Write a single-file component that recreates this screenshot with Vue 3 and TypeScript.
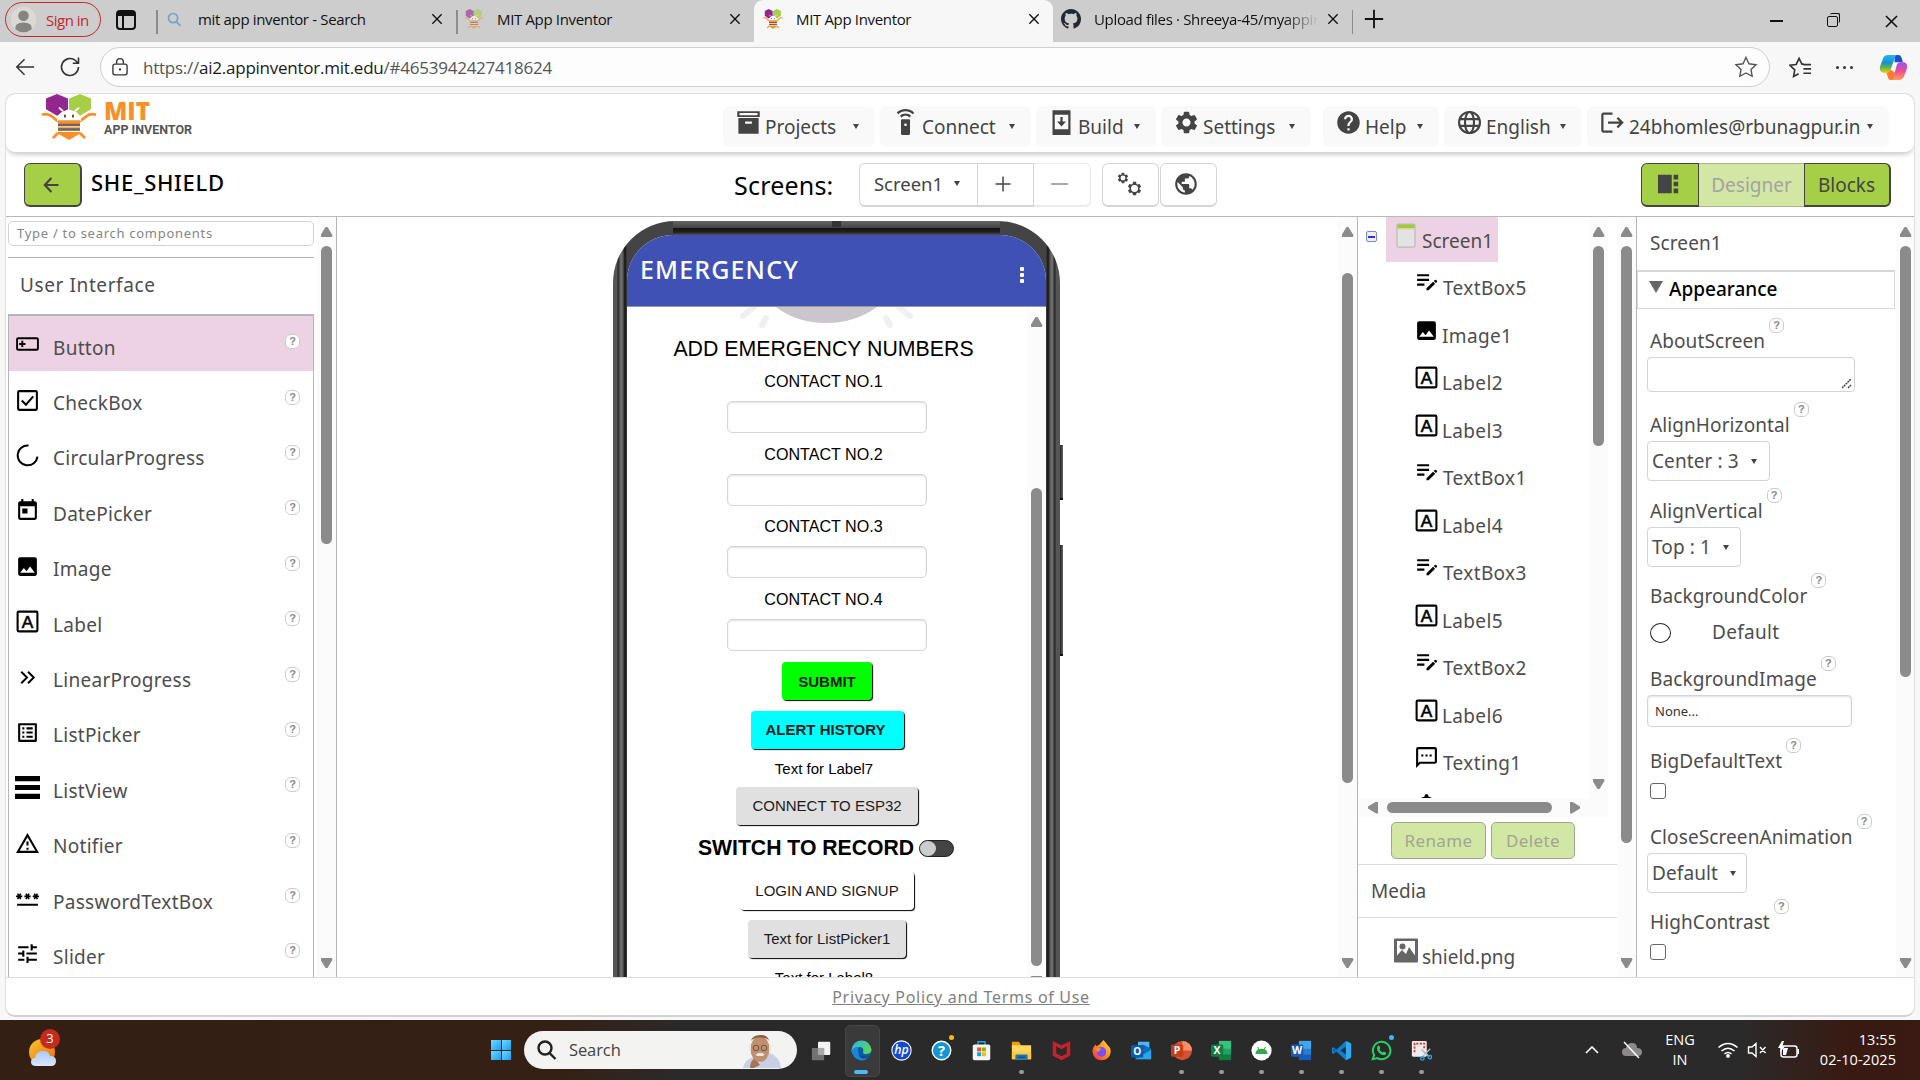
<script setup lang="ts">
interface MenuItem { label: string; icon: string; left: number; width: number }
interface Prop { label: string; height: number; kind: 'area' | 'select' | 'color' | 'field' | 'check' | 'none'; value?: string; width?: number; h?: number }

const svg = (body: string, box = '0 0 24 24', fit = 'xMidYMid meet'): string => `<svg viewBox="${box}" preserveAspectRatio="${fit}" width="100%" height="100%" style="display:block">${body}</svg>`
const p = (d: string): string => svg(`<path fill="currentColor" d="${d}"/>`)
const gear = 'M19.14 12.94c.04-.3.06-.61.06-.94 0-.32-.02-.64-.07-.94l2.03-1.58c.18-.14.23-.41.12-.61l-1.92-3.32c-.12-.22-.37-.29-.59-.22l-2.39.96c-.5-.38-1.03-.7-1.62-.94l-.36-2.54c-.04-.24-.24-.41-.48-.41h-3.84c-.24 0-.43.17-.47.41l-.36 2.54c-.59.24-1.13.57-1.62.94l-2.39-.96c-.22-.08-.47 0-.59.22L2.74 8.87c-.12.21-.08.47.12.61l2.03 1.58c-.05.3-.09.63-.09.94s.02.64.07.94l-2.03 1.58c-.18.14-.23.41-.12.61l1.92 3.32c.12.22.37.29.59.22l2.39-.96c.5.38 1.03.7 1.62.94l.36 2.54c.05.24.24.41.48.41h3.84c.24 0 .44-.17.47-.41l.36-2.54c.59-.24 1.13-.56 1.62-.94l2.39.96c.22.08.47 0 .59-.22l1.92-3.32c.12-.22.07-.47-.12-.61l-2.01-1.58z'
const bee = `<path fill="#92278f" d="M5 5 16 0 27 5V17L16 24 5 17z"/><path fill="#a5cf47" d="M28 5 39 0 50 5V17L39 24 28 17z"/>
<path d="M1 23q6-2 10 2t8 6M55 23q-6-2-10 2t-8 6M17 43l-5 6M39 43l5 6" stroke="#f7902a" stroke-width="3" fill="none"/>
<path fill="#fff" d="M16 30q1-12 12-12t12 12z"/><path d="M22 19l-4-4M34 19l4-4" stroke="#fff" stroke-width="2"/>
<path fill="#555" d="M23 23h2v3h-2zM31 23h2v3h-2z"/>
<path fill="#f7902a" d="M17 29H39V44L28 51 17 44z"/><path fill="#666" d="M17 33H39V35.500H17zM17 38H39V40.500H17z"/><path fill="#fff" d="M17 36H39V37H17zM17 41H39V42H17z"/>`

const icons: Record<string, string> = {
  logo: svg(bee, '0 0 56 51', 'none'),
  projects: svg('<path fill="currentColor" fill-rule="evenodd" d="M2 2H22V7H2zM4 3.500V5.500H20V3.500zM3 8H21V22H3zM9 11V13H15V11z"/>'),
  connect: p('M15 9H9c-.55 0-1 .45-1 1v12c0 .55.45 1 1 1h6c.55 0 1-.45 1-1V10c0-.55-.45-1-1-1zm-3 6.200c-.8 0-1.200-.4-1.200-1.200s.4-1.200 1.200-1.200 1.200.4 1.200 1.200-.4 1.200-1.200 1.200zM7.050 6.050l1.410 1.410C9.370 6.560 10.620 6 12 6s2.630.56 3.540 1.460l1.410-1.410C15.680 4.780 13.930 4 12 4s-3.680.78-4.950 2.050zM12 0C8.960 0 6.210 1.230 4.220 3.220l1.410 1.410C7.260 3.010 9.510 2 12 2s4.740 1.010 6.360 2.640l1.410-1.410C17.790 1.230 15.040 0 12 0z'),
  build: svg('<path fill="currentColor" fill-rule="evenodd" d="M4 1H20V23H4zM6 5V18H18V5z"/><path fill="currentColor" d="M11 7h2v4h3l-4 4.500L8 11h3z"/>'),
  settings: p(gear + 'M12 15.600c-1.980 0-3.600-1.620-3.600-3.600s1.620-3.600 3.600-3.600 3.600 1.620 3.600 3.600-1.620 3.600-3.600 3.600z'),
  help: p('M12 2C6.480 2 2 6.480 2 12s4.480 10 10 10 10-4.480 10-10S17.520 2 12 2zm1 17h-2v-2h2v2zm2.070-7.750l-.9.92C13.450 12.900 13 13.500 13 15h-2v-.5c0-1.100.45-2.100 1.170-2.830l1.240-1.260c.37-.36.59-.86.59-1.410 0-1.100-.9-2-2-2s-2 .9-2 2H8c0-2.210 1.790-4 4-4s4 1.790 4 4c0 .88-.36 1.680-.93 2.250z'),
  english: svg('<g fill="none" stroke="currentColor" stroke-width="1.900"><circle cx="12" cy="12" r="9.300"/><ellipse cx="12" cy="12" rx="4" ry="9.300"/><path d="M3.500 9H20.500M3.500 15H20.500"/></g>'),
  logout: p('M17 7l-1.410 1.410L18.170 11H8v2h10.170l-2.580 2.580L17 17l5-5zM4 5h8V3H4c-1.100 0-2 .9-2 2v14c0 1.100.9 2 2 2h8v-2H4V5z'),
  globe: p('M12 2C6.480 2 2 6.480 2 12s4.480 10 10 10 10-4.480 10-10S17.520 2 12 2zm-1 17.930c-3.950-.49-7-3.850-7-7.930 0-.62.08-1.210.21-1.790L9 15v1c0 1.100.9 2 2 2v1.930zm6.900-2.540c-.26-.81-1-1.390-1.900-1.390h-1v-3c0-.55-.45-1-1-1H8v-2h2c.55 0 1-.45 1-1V7h2c1.100 0 2-.9 2-2v-.41c2.930 1.190 5 4.060 5 7.410 0 2.080-.8 3.970-2.100 5.390z'),
  gears: svg(`<g fill="currentColor" fill-rule="evenodd"><g transform="translate(-.5 .5) scale(.5)"><path d="${gear}M12 16.500a4.500 4.500 0 1 1 0-9a4.500 4.500 0 0 1 0 9z"/></g><g transform="translate(8.500 8.500) scale(.64)"><path d="${gear}M12 17a5 5 0 1 1 0-10a5 5 0 0 1 0 10z"/></g></g>`),
  back: svg('<path d="M21 12H5M12.500 3.500 4.500 12 12.500 20.500" fill="none" stroke="currentColor" stroke-width="2.500"/>'),
  button: svg('<path d="M3 6H21Q22 6 22 7V16Q22 17 21 17H3Q2 17 2 16V7Q2 6 3 6zM7 8.500V14.500M4 11.500H10" fill="none" stroke="currentColor" stroke-width="1.800"/>'),
  checkbox: svg('<path d="M4 3H20Q21 3 21 4V20Q21 21 20 21H4Q3 21 3 20V4Q3 3 4 3zM6.500 12 10.500 16 17.500 8" fill="none" stroke="currentColor" stroke-width="2"/>'),
  circular: svg('<path d="M13 2.500A9.500 9.500 0 1 0 21.500 13" fill="none" stroke="currentColor" stroke-width="1.900"/>'),
  date: p('M19 3h-1V1h-2v2H8V1H6v2H5c-1.110 0-1.990.9-1.990 2L3 19c0 1.100.89 2 2 2h14c1.100 0 2-.9 2-2V5c0-1.100-.9-2-2-2zm0 16H5V8h14v11zM7 10h5v5H7z'),
  image: p('M21 19V5c0-1.100-.9-2-2-2H5c-1.100 0-2 .9-2 2v14c0 1.100.9 2 2 2h14c1.100 0 2-.9 2-2zM8.500 13.500l2.500 3.010L14.500 12l4.500 6H5l3.500-4.500z'),
  label: svg('<rect x="2.500" y="2.500" width="19" height="19" rx="1" fill="none" stroke="currentColor" stroke-width="2"/><text x="12" y="18" text-anchor="middle" font-family="Liberation Sans, sans-serif" font-size="16.500" stroke="currentColor" stroke-width=".6">A</text>'),
  linear: svg('<path d="M6 6.500 11.500 12 6 17.500M12.500 6.500 18 12 12.500 17.500" fill="none" stroke="currentColor" stroke-width="1.900"/>'),
  listpicker: p('M19 5v14H5V5h14m1.100-2H3.900c-.5 0-.9.4-.9.9v16.200c0 .4.4.9.9.9h16.200c.4 0 .9-.5.9-.9V3.900c0-.5-.5-.9-.9-.9zM11 7h6v2h-6V7zm0 4h6v2h-6v-2zm0 4h6v2h-6zM7 7h2v2H7zm0 4h2v2H7zm0 4h2v2H7z'),
  listview: p('M0 1H24V6H0zM0 9.500H24V14.500H0zM0 18H24V23H0z'),
  notifier: p('M12 5.990L19.530 19H4.470L12 5.990M12 2L1 21h22L12 2zm1 14h-2v2h2v-2zm0-6h-2v4h2v-4z'),
  password: p('M2 17h20v2H2v-2zm1.150-4.050L4 11.470l.85 1.480 1.300-.75-.85-1.480H7v-1.500H5.300l.85-1.470L4.850 7 4 8.470 3.150 7l-1.300.75.85 1.470H1v1.500h1.700l-.85 1.480 1.300.75zm6.700-.75l1.300.75.85-1.480.85 1.480 1.300-.75-.85-1.480H15v-1.500h-1.700l.85-1.470-1.300-.75L12 8.470 11.150 7l-1.300.75.85 1.470H9v1.500h1.700l-.85 1.480zM23 9.220h-1.700l.85-1.470-1.300-.75L20 8.470 19.150 7l-1.300.75.85 1.470H17v1.500h1.700l-.85 1.480 1.300.75.85-1.480.85 1.480 1.300-.75-.85-1.480H23v-1.500z'),
  slider: p('M3 17v2h6v-2H3zM3 5v2h10V5H3zm10 16v-2h8v-2h-8v-2h-2v6h2zM7 9v2H3v2h4v2h2V9H7zm14 4v-2H11v2h10zm-6-4h2V7h4V5h-4V3h-2v6z'),
  textbox: svg('<path d="M3 5H14.500M3 9.500H14.500M3 14H10" stroke="currentColor" stroke-width="2"/><path fill="currentColor" d="M12 17.500 18.300 11.200 20.300 13.200 14 19.500H12zM19 10.500 20 9.500Q20.600 9.100 21.200 9.500L22 10.300Q22.500 11 22 11.500L21 12.500z"/>'),
  texting: p('M4 4h16v12H5.170L4 17.170V4m0-2c-1.100 0-1.990.9-1.990 2L2 22l4-4h14c1.100 0 2-.9 2-2V4c0-1.100-.9-2-2-2H4zm3 7h2v2H7zm4 0h2v2h-2zm4 0h2v2h-2z'),
  star: p('M12 1Q14 1 14 3.500 19 4.500 20 9V18H4V9Q5 4.500 10 3.500 10 1 12 1z'),
  screen: svg('<rect x="3" y=".6" width="18" height="23" rx="1.500" fill="#e3e3e3" stroke="#b9b9b9" stroke-width="1.200"/><path fill="#a5c936" d="M3.500 1H20.500V4.500H3.500z"/><path fill="#cfdc9c" d="M3.500 4.500H20.500V6H3.500z"/>'),
  media: svg('<path fill="#666" fill-rule="evenodd" d="M1 0H23Q24 0 24 1V23Q24 24 23 24H1Q0 24 0 23V1Q0 0 1 0zM3 2.500V17L8 11.500 12 15.500 15 8.500 21 17V2.500z"/><circle cx="8.500" cy="8" r="3" fill="#666"/>'),
  panel: svg('<path fill="currentColor" d="M0 2H15V22H0zM17 2H22V7H17zM17 9.500H22V14.500H17zM17 17H22V22H17z"/>'),
  x: svg('<path d="M5 5 19 19M19 5 5 19" stroke="currentColor" stroke-width="2" fill="none"/>'),
  plus: svg('<path d="M12 2V22M2 12H22" stroke="currentColor" stroke-width="2" fill="none"/>'),
  tabs: svg('<rect x="3" y="3" width="18" height="18" rx="3" fill="none" stroke="#111" stroke-width="2"/><path fill="#111" d="M3 3H21V8H3z"/><path d="M9 7V21" stroke="#111" stroke-width="2"/>'),
  avatar: svg('<circle cx="18" cy="18" r="17" fill="#dcd9d3"/><circle cx="18" cy="13" r="7" fill="#868481"/><path fill="#868481" d="M7 31Q6 22 18 22T29 31Q24 35 18 35T7 31z"/>', '0 0 36 36'),
  search: svg('<g fill="none" stroke="currentColor" stroke-width="2.400"><circle cx="10" cy="10" r="6.500"/><path d="M14.500 15 20.500 21"/></g>'),
  github: svg('<path fill="#24292f" d="M8 0C3.580 0 0 3.580 0 8c0 3.540 2.290 6.530 5.470 7.590.4.07.55-.17.55-.38 0-.19-.01-.82-.01-1.490-2.010.37-2.530-.49-2.690-.94-.09-.23-.48-.94-.82-1.130-.28-.15-.68-.52-.01-.53.63-.01 1.080.58 1.230.82.72 1.210 1.870.87 2.330.66.07-.52.28-.87.51-1.070-1.780-.2-3.640-.89-3.640-3.950 0-.87.31-1.590.82-2.150-.08-.2-.36-1.020.08-2.120 0 0 .67-.21 2.200.82.64-.18 1.320-.27 2-.27.68 0 1.360.09 2 .27 1.530-1.040 2.200-.82 2.200-.82.44 1.100.16 1.920.08 2.120.51.56.82 1.270.82 2.150 0 3.070-1.870 3.750-3.650 3.950.29.25.54.73.54 1.480 0 1.070-.01 1.930-.01 2.200 0 .21.15.46.55.38A8.012 8.012 0 0 0 16 8c0-4.420-3.580-8-8-8z"/>', '0 0 16 16'),
  reload: svg('<path d="M20.500 12A8.500 8.500 0 1 1 17.500 5.500L20 8M20.500 2.500V8.200H14.800" fill="none" stroke="currentColor" stroke-width="1.600"/>'),
  navback: svg('<path d="M22 12H3M11.500 3.500 3 12 11.500 20.500" fill="none" stroke="currentColor" stroke-width="1.600"/>'),
  lock: svg('<g fill="none" stroke="currentColor" stroke-width="1.600"><rect x="3.500" y="8.500" width="17" height="13" rx="2.500"/><path d="M8 8V6Q8 2 12 2T16 6V8"/></g><circle cx="12" cy="15" r="1.400" fill="currentColor"/>'),
  fav: svg('<path d="M12 2.500 15 8.800 22 9.700 17 14.500 18.200 21.300 12 18 5.800 21.300 7 14.500 2 9.700 9 8.800z" fill="none" stroke="currentColor" stroke-width="1.400"/>'),
  favs: svg('<path d="M15.500 8.500 13.500 8.500 10.500 2.500 7.500 8.800 1 9.700 6 14.500 4.800 21.300 10 18.500M15 9H23M15 13.500H23M15 18H23" fill="none" stroke="currentColor" stroke-width="1.700"/>'),
  copilot: svg('<defs><linearGradient id="ca" x2="0" y2="1"><stop stop-color="#23b5f5"/><stop offset=".45" stop-color="#1c8fd0"/><stop offset=".7" stop-color="#58b94a"/><stop offset="1" stop-color="#ffc800"/></linearGradient><linearGradient id="cb" x2="0" y2="1"><stop stop-color="#9a50f0"/><stop offset=".5" stop-color="#ec4f92"/><stop offset="1" stop-color="#ffa05a"/></linearGradient></defs><path fill="#1b4bd0" d="M15 2H19Q21 2 22 5L23 9H15z"/><path fill="url(#ca)" d="M9 2H17Q15 4 14 8L11 17Q10 19 7 19H4Q0 18 1 13L4 5Q5 2 9 2z"/><path fill="#ff7a30" d="M7 19Q10 19 11 16L17 20Q16 26 14 26H11Q9 26 8.500 23z"/><path fill="url(#cb)" d="M21 9H24Q28 10 27 15L24 23Q23 26 19 26H12Q14 25 15 20L17 12Q18 9 21 9z"/>', '0 0 28 28'),
}

const menu: MenuItem[] = [
  { label: 'Projects', icon: 'projects', left: 0, width: 152 },
  { label: 'Connect', icon: 'connect', left: 5, width: 151 },
  { label: 'Build', icon: 'build', left: 5, width: 120 },
  { label: 'Settings', icon: 'settings', left: 5, width: 150 },
  { label: 'Help', icon: 'help', left: 12, width: 116 },
  { label: 'English', icon: 'english', left: 5, width: 138 },
  { label: '24bhomles@rbunagpur.in', icon: 'logout', left: 5, width: 302 },
]
const palette = [
  ['Button', 'button'], ['CheckBox', 'checkbox'], ['CircularProgress', 'circular'], ['DatePicker', 'date'], ['Image', 'image'], ['Label', 'label'],
  ['LinearProgress', 'linear'], ['ListPicker', 'listpicker'], ['ListView', 'listview'], ['Notifier', 'notifier'], ['PasswordTextBox', 'password'], ['Slider', 'slider'],
]
const tree = [
  ['TextBox5', 'textbox'], ['Image1', 'image'], ['Label2', 'label'], ['Label3', 'label'], ['TextBox1', 'textbox'], ['Label4', 'label'],
  ['TextBox3', 'textbox'], ['Label5', 'label'], ['TextBox2', 'textbox'], ['Label6', 'label'], ['Texting1', 'texting'], ['', 'star'],
]
const props: Prop[] = [
  { label: 'AboutScreen', height: 84, kind: 'area', width: 208, h: 35 },
  { label: 'AlignHorizontal', height: 86, kind: 'select', value: 'Center : 3', width: 123, h: 40 },
  { label: 'AlignVertical', height: 85, kind: 'select', value: 'Top : 1', width: 94, h: 40 },
  { label: 'BackgroundColor', height: 83, kind: 'color' },
  { label: 'BackgroundImage', height: 82, kind: 'field', value: 'None...', width: 205, h: 32 },
  { label: 'BigDefaultText', height: 76, kind: 'check' },
  { label: 'CloseScreenAnimation', height: 85, kind: 'select', value: 'Default', width: 100, h: 40 },
  { label: 'HighContrast', height: 77, kind: 'check' },
]
const letterTile = (c1: string, c2: string, c3: string, l: string): string => svg(`<path fill="${c1}" d="M9 1H23V11H9z"/><path fill="${c2}" d="M9 10H23V17H9z"/><path fill="${c3}" d="M9 17H23V23H9z"/><rect y="5" width="14" height="14" rx="1.500" fill="${c3}"/><text x="7" y="16.300" text-anchor="middle" font-family="Open Sans, sans-serif" font-weight="700" font-size="12" fill="#fff">${l}</text>`)
const tasks: { name: string; art: string; dot?: boolean; active?: boolean; badge?: string }[] = [
  { name: 'taskview', art: svg('<rect x="8" y="2" width="14" height="15" rx="1" fill="#f4f4f4"/><rect x="1" y="9" width="14" height="14" rx="1" fill="#777" opacity=".95"/><path fill="#aaa" d="M8 9H15V17H8z"/>') },
  { name: 'edge', active: true, art: svg('<defs><linearGradient id="eg" x2="1" y2=".6"><stop stop-color="#29b6e8"/><stop offset="1" stop-color="#59d75a"/></linearGradient></defs><circle cx="12" cy="12" r="11.500" fill="#0c59a4"/><path fill="url(#eg)" d="M.6 11Q3 .5 12 .5T23.500 11Q23 16 17 16 13 16 14 13 15 8 9 8 4 8 .6 13z"/><path fill="#1a86d9" d="M.6 12Q4 7.500 9 8 7 12 10 17T19 20.500Q16 23.500 12 23.500 2 22 .6 12z"/><path fill="#0c4a94" d="M9 12Q8 20 20 18.500 17 22 13 21 7 19 9 12z"/>') },
  { name: 'hp', art: svg('<circle cx="12" cy="12" r="11" fill="#1048d8" stroke="#fff" stroke-width="1.200"/><text x="12" y="16.500" text-anchor="middle" font-family="Open Sans, sans-serif" font-style="italic" font-size="14" font-weight="600" fill="#fff">hp</text>') },
  { name: 'assist', badge: '#ffb900', art: svg('<circle cx="12" cy="12" r="10.600" fill="#1196d6" stroke="#fff" stroke-width="1.600"/><text x="12" y="18.200" text-anchor="middle" font-family="Open Sans, sans-serif" font-size="17" font-weight="700" fill="#fff">?</text>') },
  { name: 'store', art: svg('<path d="M8 6V2H16V6" fill="none" stroke="#28a8ea" stroke-width="1.600"/><rect x="2" y="5" width="20" height="18" rx="2" fill="#f5f5f5"/><path fill="#f25022" d="M7 8.500H11.500V13H7z"/><path fill="#7fba00" d="M12.500 8.500H17V13H12.500z"/><path fill="#00a4ef" d="M7 14H11.500V18.500H7z"/><path fill="#ffb900" d="M12.500 14H17V18.500H12.500z"/>') },
  { name: 'explorer', dot: true, art: svg('<path fill="#e8a30c" d="M1 2H9L11 5V9H1z"/><path fill="#ffd75e" d="M1 6H23V22H1z"/><path fill="#ffca3a" d="M1 14H23V22H1z"/><path fill="#1074c8" d="M5 18Q5 16.500 6.500 16.500H17.500Q19 16.500 19 18V22H5z"/><path fill="#0a4f96" d="M8 19H16V20.500H8z"/>') },
  { name: 'mcafee', art: svg('<path fill="#c8202c" d="M2 1 12 6 22 1V18L12 23 2 18zM6 7V15.500L12 18.500 18 15.500V7L12 10.500z" fill-rule="evenodd"/>') },
  { name: 'firefox', art: svg('<defs><linearGradient id="ff" x1="1" x2="0" y2="1"><stop stop-color="#ffe14a"/><stop offset=".5" stop-color="#ff8a1f"/><stop offset="1" stop-color="#f5245c"/></linearGradient></defs><path fill="url(#ff)" d="M14 0Q18 4 19 6 23 9 22.500 14 21 23 12 23T1.500 13Q2 8 5 5L6 7Q10 6 14 0z"/><circle cx="12" cy="13.500" r="5.500" fill="#7c4dff"/><path fill="#ff9422" d="M5 9Q9 8 12 10.500 9 11 9.500 13 6 14 5 9z"/>') },
  { name: 'outlook', art: svg('<path fill="#50b5f5" d="M8 2H21V10H8z"/><path fill="#0f6cbd" d="M5 9 14 5 23 10V22H5z"/><path fill="#28a8ea" d="M5 22 23 11V22z"/><rect y="6" width="14" height="14" rx="1.500" fill="#0a5cb0"/><text x="7" y="17" text-anchor="middle" font-family="Open Sans, sans-serif" font-weight="700" font-size="11.500" fill="#fff">O</text>') },
  { name: 'powerpoint', dot: true, art: svg('<circle cx="13" cy="12" r="11" fill="#d35230"/><path fill="#ff8f6b" d="M13 1A11 11 0 0 1 24 12H13z"/><rect y="5" width="14" height="14" rx="1.500" fill="#c43e1c"/><text x="7" y="16.300" text-anchor="middle" font-family="Open Sans, sans-serif" font-weight="700" font-size="12" fill="#fff">P</text>') },
  { name: 'excel', dot: true, art: letterTile('#33c481', '#21a366', '#107c41', 'X') },
  { name: 'android', dot: true, art: svg('<circle cx="12" cy="12" r="11.500" fill="#fff"/><path fill="#34a853" d="M5 16Q5.500 10 12 10T19 16z"/><path d="M7.500 8 9 11M16.500 8 15 11" stroke="#34a853" stroke-width="1.200"/>') },
  { name: 'word', dot: true, art: letterTile('#41a5ee', '#2b7cd3', '#185abd', 'W') },
  { name: 'vscode', dot: true, art: svg('<path fill="#0a7fd0" d="M17 1 23 4V20L17 23 6 13 2.500 16 1 15V9L2.500 8 6 11z"/><path fill="#2b2a2a" d="M17 7.500V16.500L11 12zM3 10.500V13.500L4.700 12z"/><path fill="#30aaf2" d="M17 1 23 4V20L17 23z"/>') },
  { name: 'whatsapp', dot: true, badge: '#3fb4ff', art: svg('<path fill="none" stroke="#25d366" stroke-width="2.200" d="M2 22 3.500 17A10 10 0 1 1 7.200 20.700z"/><path fill="#25d366" d="M8 6.500Q9.500 6 10 7.500L10.500 9.500 9.700 10.800Q11 13.200 13.400 14.300L14.700 13.200 17.500 14.500Q17.500 17 15 17.500 12 17.500 9 14.500T7 9Q7 7 8 6.500z"/>') },
  { name: 'snip', dot: true, art: svg('<rect x="1" y="1" width="17" height="18" rx="1.500" fill="#eee"/><path d="M4 14V4H15V10" fill="none" stroke="#d83b2a" stroke-width="2" stroke-dasharray="2.500 1.500"/><path d="M12 20 22 10M12 11 21 19" stroke="#bbb" stroke-width="1.600"/><circle cx="13" cy="21" r="2" fill="none" stroke="#2aa0ec" stroke-width="1.500"/><circle cx="21.500" cy="19.500" r="2" fill="none" stroke="#2aa0ec" stroke-width="1.500"/>') },
]
</script>

<template>
  <div class="desk">
    <header class="tabs">
      <div class="signin"><i class="avatar" v-html="icons.avatar" /><span>Sign in</span></div>
      <i class="tabsicon" v-html="icons.tabs" />
      <div class="tab t1"><i class="fi blue" v-html="icons.search" /><span>mit app inventor - Search</span><i class="cx" v-html="icons.x" /></div>
      <div class="tab t2"><i class="fi dim" v-html="icons.logo" /><span>MIT App Inventor</span><i class="cx" v-html="icons.x" /></div>
      <div class="tab t3"><i class="fi" v-html="icons.logo" /><span>MIT App Inventor</span><i class="cx" v-html="icons.x" /></div>
      <div class="tab t4"><i class="fi" v-html="icons.github" /><span class="fade">Upload files · Shreeya-45/myappin</span><i class="cx" v-html="icons.x" /></div>
      <i class="newtab" v-html="icons.plus" />
      <div class="win"><i class="min" /><i class="restore"><b /></i><i class="close" v-html="icons.x" /></div>
    </header>

    <div class="bar">
      <i class="nb" v-html="icons.navback" />
      <i class="nr" v-html="icons.reload" />
      <div class="addr"><i v-html="icons.lock" /><span><em>https://</em>ai2.appinventor.mit.edu<em>/#4653942427418624</em></span><i class="fav" v-html="icons.fav" /></div>
      <i class="favs" v-html="icons.favs" />
      <div class="dots"><b /><b /><b /></div>
      <i class="cop" v-html="icons.copilot" />
    </div>

    <main class="page">
      <div class="frame">
        <nav class="head">
          <div class="brand">
            <i v-html="icons.logo" />
            <svg width="92" height="44"><text x="0" y="25" class="mit" textLength="46" lengthAdjust="spacingAndGlyphs">MIT</text><text x="0" y="39" class="ai" textLength="88" lengthAdjust="spacingAndGlyphs">APP INVENTOR</text></svg>
          </div>
          <div v-for="m in menu" :key="m.label" class="mi" :style="{ width: m.width + 'px', marginLeft: m.left + 'px' }">
            <i v-html="icons[m.icon]" /><span>{{ m.label }}</span><b class="tri" />
          </div>
        </nav>

        <div class="tools">
          <div class="goback"><i v-html="icons.back" /></div>
          <h1>SHE_SHIELD</h1>
          <span class="screens">Screens:</span>
          <div class="grp">
            <div class="g1">Screen1<b class="tri" /></div>
            <div class="g2"><i v-html="icons.plus" /></div>
            <div class="g3"><b /></div>
          </div>
          <div class="grp two">
            <div><i v-html="icons.gears" /></div>
            <div><i class="gl" v-html="icons.globe" /></div>
          </div>
          <div class="modes"><div class="m1"><i v-html="icons.panel" /></div><div class="m2">Designer</div><div class="m3">Blocks</div></div>
        </div>

        <section class="work">
          <aside class="pal">
            <div class="find">Type / to search components</div>
            <div class="cat">User Interface</div>
            <div class="items">
              <div v-for="(c, i) in palette" :key="c[0]" class="item" :class="{ on: i === 0 }">
                <i v-html="icons[c[1]]" /><span>{{ c[0] }}</span><b class="q">?</b>
              </div>
            </div>
          </aside>
          <div class="sb s-pal"><u class="up" /><s :style="{ height: '298px', marginTop: '9px' }" /><u class="dn" /></div>

          <div class="viewer">
            <div class="phone">
              <div class="speaker" />
              <div class="glass">
                <div class="appbar"><span>EMERGENCY</span><div class="kebab"><b /><b /><b /></div></div>
                <div class="body">
                  <div class="form">
                    <svg class="siren" width="200" height="24" viewBox="0 0 200 24"><path fill="#cbc5ce" d="M49 0H150Q128 16 99 16T49 0z" /><path d="M27 0 16 9M39 11 35 18M172 0 183 9M159 11 163 18" stroke="#f1eff3" stroke-width="6" stroke-linecap="round" /></svg>
                    <div class="h">ADD EMERGENCY NUMBERS</div>
                    <template v-for="n in 4" :key="n"><div class="l">CONTACT NO.{{ n }}</div><div class="tb" /></template>
                    <div class="btn green">SUBMIT</div>
                    <div class="btn cyan">ALERT HISTORY</div>
                    <div class="l7">Text for Label7</div>
                    <div class="btn grey esp">CONNECT TO ESP32</div>
                    <div class="sw"><span>SWITCH TO RECORD</span><i><b /></i></div>
                    <div class="btn white">LOGIN AND SIGNUP</div>
                    <div class="btn grey lp">Text for ListPicker1</div>
                    <div class="l7 l8">Text for Label8</div>
                  </div>
                  <div class="sb s-ph"><u class="up" /><s :style="{ height: '478px', marginTop: '161px' }" /><u class="dn" /></div>
                </div>
              </div>
              <div class="key k1" /><div class="key k2" />
            </div>
          </div>
          <div class="sb s-view"><u class="up" /><s :style="{ height: '510px', marginTop: '36px' }" /><u class="dn" /></div>

          <div class="comp">
            <div class="treebox">
              <div class="tree">
                <div class="root"><div class="minus"><b /></div><div class="sel"><i v-html="icons.screen" /><span>Screen1</span></div></div>
                <div v-for="(t, i) in tree" :key="i" class="node" :class="t[1]"><i v-html="icons[t[1]]" /><span>{{ t[0] }}</span></div>
              </div>
              <div class="sb s-tree"><u class="up" /><s :style="{ height: '200px', marginTop: '9px' }" /><u class="dn" /></div>
            </div>
            <div class="hs"><u class="lf" /><s /><u class="rt" /></div>
            <div class="acts"><div class="a1">Rename</div><div class="a2">Delete</div></div>
            <div class="media">Media</div>
            <div class="file"><i v-html="icons.media" /><span>shield.png</span></div>
          </div>
          <div class="sb s-comp"><u class="up" /><s :style="{ height: '597px', marginTop: '9px' }" /><u class="dn" /></div>

          <div class="props">
            <div class="ptitle">Screen1</div>
            <div class="phead"><b /><span>Appearance</span></div>
            <div v-for="pr in props" :key="pr.label" class="prop" :style="{ height: pr.height + 'px' }">
              <div class="pl"><span>{{ pr.label }}</span><b class="q">?</b></div>
              <div v-if="pr.kind === 'area'" class="area" :style="{ width: pr.width + 'px', height: pr.h + 'px' }"><svg width="10" height="10"><path d="M0 9 9 0M6 9 9 6" stroke="#444" stroke-width="1.500" stroke-dasharray="2 .6" /></svg></div>
              <div v-else-if="pr.kind === 'select'" class="select" :style="{ width: pr.width + 'px', height: pr.h + 'px' }">{{ pr.value }}<b class="tri" /></div>
              <div v-else-if="pr.kind === 'field'" class="field" :style="{ width: pr.width + 'px', height: pr.h + 'px' }">{{ pr.value }}</div>
              <div v-else-if="pr.kind === 'color'" class="color"><i /><span>Default</span></div>
              <div v-else-if="pr.kind === 'check'" class="check" />
            </div>
            <b class="q next" />
          </div>
          <div class="sb s-prop"><u class="up" /><s :style="{ height: '431px', marginTop: '9px' }" /><u class="dn" /></div>
        </section>

        <footer><a>Privacy Policy and Terms of Use</a></footer>
      </div>
    </main>

    <div class="taskbar">
      <div class="weather">
        <svg width="36" height="42" viewBox="0 0 36 42"><defs><linearGradient id="sun" x2="1" y2="1"><stop stop-color="#f7c52d" /><stop offset="1" stop-color="#ef6a12" /></linearGradient><linearGradient id="cl" x2="0" y2="1"><stop stop-color="#a9c8fb" /><stop offset="1" stop-color="#dbe9ff" /></linearGradient></defs><circle cx="14" cy="23" r="13" fill="url(#sun)" /><path fill="url(#cl)" d="M8 37Q3 37 3 33 3 29 7 29 8 22 15 22 21 22 22 27 28 27 28 32 28 37 23 37z" /></svg>
        <b>3</b>
      </div>
      <div class="winlogo"><i /><i /><i /><i /></div>
      <div class="tsearch">
        <i v-html="icons.search" /><span>Search</span>
        <svg width="40" height="38" viewBox="0 0 40 38"><path fill="#c9cfe4" d="M1 37Q3 28 12 26L18 32 28 22Q38 26 39 37z" /><path fill="#a77556" d="M8 37Q8 30 13 27L18 34 12 37z" /><ellipse cx="18" cy="18" rx="9.500" ry="13" fill="#c0906e" /><path fill="#8b5e45" d="M9 10Q10 4.500 18 4T27 10Q25 6.500 18 6.500T9 10z" /><path fill="#e9e4df" d="M7 14H9V20H7zM27 14H29V20H27zM13.500 23.500Q18 20 22.500 23.500L21 25H15z" /><g fill="none" stroke="#5d4334" stroke-width=".8"><circle cx="14" cy="17" r="2.800" /><circle cx="22" cy="17" r="2.800" /></g></svg>
      </div>
      <div v-for="t in tasks" :key="t.name" class="task" :class="{ act: t.active }">
        <i v-html="t.art" /><b v-if="t.dot" class="dot" /><b v-if="t.active" class="run" /><b v-if="t.badge" class="bdg" :style="{ background: t.badge }" />
      </div>
      <div class="tray">
        <svg width="16" height="10"><path d="M2 8 8 2 14 8" fill="none" stroke="#fff" stroke-width="1.600" /></svg>
        <svg class="cloud" width="22" height="18"><path fill="#8d8b8a" d="M5 15Q1 15 1 11T5 7Q6 2 11 2T16 7Q21 7 21 11T17 15z" /><path d="M3 1 18 17" stroke="#fff" stroke-width="1.400" /></svg>
        <div class="lang">ENG<br />IN</div>
        <svg class="wifi" width="22" height="18"><g fill="none" stroke="#fff" stroke-width="1.600"><path d="M1.500 6.500Q11-1.500 20.500 6.500M4.500 10Q11 4.500 17.500 10M7.500 13Q11 10 14.500 13" /></g><circle cx="11" cy="15" r="1.900" fill="#fff" /></svg>
        <svg class="vol" width="20" height="16"><path d="M1.500 5H5L9 1.500V14.500L5 11H1.500zM13 5 18.500 11M18.500 5 13 11" fill="none" stroke="#fff" stroke-width="1.400" /></svg>
        <svg class="bat" width="22" height="18"><rect x="3" y="5" width="16" height="11" rx="2.500" fill="none" stroke="#fff" stroke-width="1.500" /><path fill="#fff" d="M19.500 8H21V13H19.500zM5 7H10L8 14H5zM4 0 0 7H3L2 12 7 5H4.500L6 0z" /></svg>
        <div class="clock">13:55<br />02-10-2025</div>
      </div>
    </div>
  </div>
</template>

<style>
html, body { margin: 0; overflow: hidden; background: #f7f7f7; }
</style>

<style scoped>
.desk { width: 1920px; height: 1080px; overflow: hidden; display: flex; flex-direction: column; background: #f7f7f7; font-family: "Noto Sans", "Open Sans", sans-serif; font-size: 19px; color: #4d4d4d; }
.desk * { box-sizing: border-box; }
i, em { font-style: normal; }
i { display: block; flex: none; }
u, s { text-decoration: none; display: block; flex: none; }
.tri { width: 0; height: 0; border: 3.500px solid transparent; border-top: 5px solid #444; border-bottom: 0; }

.tabs { height: 42px; flex: none; display: flex; align-items: flex-start; background: #cdcdcd; font-family: "Open Sans", sans-serif; font-size: 15px; color: #111; }
.signin { margin: 2px 0 0 5px; width: 96px; height: 35px; border: 1.500px solid #c4262e; border-radius: 18px; display: flex; align-items: center; color: #c4262e; }
.avatar { width: 27px; height: 27px; margin: 0 9px 0 4px; }
.signin span { letter-spacing: -.5px; white-space: nowrap; }
.tabsicon { width: 24px; height: 24px; margin: 8px 0 0 13px; }
.tab { height: 42px; display: flex; align-items: center; position: relative; white-space: nowrap; padding-bottom: 4px; }
.tab .fi { width: 20px; height: 20px; margin-right: 13px; }
.tab .cx { width: 16px; height: 16px; margin-left: auto; }
.tab span { letter-spacing: -.34px; }
.blue { color: #6fa4cf; }
.dim { opacity: .6; }
.t1 { width: 300px; margin-left: 18px; padding-left: 10px; padding-right: 11px; }
.t1::before, .t2::before { content: ""; position: absolute; left: 0; top: 10px; width: 1.500px; height: 24px; background: #8b8b8b; }
.t1 .fi { width: 17px; height: 17px; margin-right: 15px; }
.t2 { width: 298px; padding-left: 8px; padding-right: 11px; }
.t3 { width: 299px; padding-left: 9px; padding-right: 11px; background: #f7f7f7; border-radius: 9px 9px 0 0; }
.t4 { width: 300px; padding-left: 8px; padding-right: 12px; }
.t4::after { content: ""; position: absolute; right: 0; top: 10px; width: 1.500px; height: 24px; background: #8b8b8b; }
.fade { width: 224px; overflow: hidden; mask-image: linear-gradient(90deg, #000 85%, transparent); }
.newtab { width: 22px; height: 22px; margin: 8px 0 0 10px; }
.win { margin-left: auto; display: flex; align-items: center; height: 42px; padding-right: 21px; }
.min { width: 13px; height: 1.500px; background: #111; margin-right: 44px; }
.restore { width: 11px; height: 11px; border: 1.300px solid #111; border-radius: 2px; margin-right: 44px; position: relative; }
.restore b { position: absolute; left: 2px; top: -4px; width: 10px; height: 10px; border: 1.300px solid #111; border-left: 0; border-bottom: 0; border-radius: 2px; }
.close { width: 19px; height: 19px; margin-right: -2px; }

.bar { height: 51px; flex: none; display: flex; align-items: center; padding-bottom: 1px; font-family: "Open Sans", sans-serif; font-size: 17px; color: #333; }
.nb { width: 22px; height: 22px; margin-left: 14px; }
.nr { width: 24px; height: 24px; margin-left: 22px; }
.addr { width: 1670px; height: 40px; margin-left: 18px; border: 1px solid #cfcfcf; border-radius: 20px; background: #fdfdfd; display: flex; align-items: center; padding: 0 11px 0 9px; }
.addr i { width: 20px; height: 20px; }
.addr span { margin-left: 13px; color: #1b1b1b; letter-spacing: -.24px; white-space: nowrap; }
.addr em { color: #555; }
.addr .fav { margin-left: auto; width: 24px; height: 24px; color: #555; }
.favs { width: 23px; height: 23px; margin-left: 19px; }
.dots { display: flex; gap: 4px; margin-left: 24px; width: 17px; }
.dots b { width: 3px; height: 3px; border-radius: 50%; background: #333; }
.cop { width: 29px; height: 29px; margin-left: 26px; }

.page { height: 927px; flex: none; padding: 0 5px; }
.frame { width: 1910px; height: 924px; border-radius: 10px; background: #fff; border: 1px solid #dedede; border-bottom: 2px solid #d2d2d2; overflow: hidden; display: flex; flex-direction: column; }
.head { height: 60px; flex: none; width: 1908px; border-bottom: 2px solid #d8d8d8; border-radius: 10px; box-shadow: 0 1px 4px rgba(0,0,0,.18); display: flex; padding: 0 25px 0 0; }
.brand { width: 717px; display: flex; flex: none; padding-left: 35px; }
.brand i { width: 56px; height: 46px; margin-top: 0; }
.brand svg { margin: 1px 0 0 7px; }
.mit { font: 800 25px "Open Sans", sans-serif; fill: #f7902a; }
.ai { font: 700 12.500px Roboto, sans-serif; fill: #555; }
.mi { height: 41px; margin-top: 12px; flex: none; border-radius: 7px; background: #f9f9f9; display: flex; align-items: center; padding: 0 16px 0 12px; color: #444; white-space: nowrap; }
.mi i { width: 27px; height: 27px; margin: -9px 3px 0 0; }
.mi .tri { margin-left: auto; }

.tools { height: 63px; flex: none; display: flex; align-items: flex-start; padding: 9px 23px 0 18px; border-bottom: 1px solid #b9b9b9; color: #444; }
.goback { width: 58px; height: 44px; background: #a5cf47; border: 1px solid #444; border-width: 1px 2px 2px 1px; border-radius: 6px; display: flex; align-items: center; justify-content: center; }
.goback i { width: 20px; height: 20px; margin-right: 3px; }
h1 { margin: 4px 0 0 9px; font-size: 22px; line-height: 30px; font-weight: 500; color: #000; width: 200px; letter-spacing: .7px; white-space: nowrap; }
.screens { margin: 5px 0 0 443px; width: 125px; font-size: 25px; line-height: 34px; color: #000; letter-spacing: .2px; }
.grp { display: flex; height: 44px; }
.grp > div { display: flex; align-items: center; justify-content: center; border: 1px solid #d5d5d5; border-bottom-width: 2px; background: #fff; }
.grp .g1 { width: 119px; border-radius: 6px 0 0 6px; gap: 11px; white-space: nowrap; font-size: 18.500px; padding: 0 3px 2px 0; }
.g2 { width: 56px; border-left: 0 !important; }
.g2 i { width: 18px; height: 18px; margin: 0 5px 2px 0; }
.g3 { width: 57px; border-left: 0 !important; border-radius: 0 6px 6px 0; border-color: #eaeaea !important; }
.g3 b { width: 17px; height: 2px; background: #aaa; margin: 0 6px 2px 0; }
.two { margin-left: 11px; gap: 1px; }
.two > div { width: 57px; border-radius: 6px; }
.two i { width: 26px; height: 26px; margin: 0 2px 2px 0; }
.two .gl { margin: 0 5px 2px 0; }
.modes { margin-left: auto; display: flex; height: 44px; }
.modes > div { display: flex; align-items: center; justify-content: center; border: 1px solid #444; border-bottom-width: 2px; background: #a5cf47; }
.modes .m1 { width: 58px; border-radius: 6px 0 0 6px; }
.m1 i { width: 24px; height: 22px; margin: 0 2px 2px 0; }
.modes .m2 { width: 105px; background: #d3e7a4; color: #a3a3a3; border-color: #aab38f; border-width: 1px 0; padding-bottom: 1px; }
.modes .m3 { width: 87px; border-radius: 0 6px 6px 0; border-right-width: 2px; padding-right: 1px; }

.work { height: 761px; flex: none; display: flex; overflow: hidden; border-bottom: 1px solid #dcdcdc; }
.sb { height: 760px; flex: none; width: 20px; background: #fbfbfb; display: flex; flex-direction: column; align-items: center; padding: 10px 0 9px; }
.sb .up { width: 12px; height: 10px; background: #8b8b8b; clip-path: polygon(42% 0, 58% 0, 100% 82%, 94% 100%, 6% 100%, 0 82%); }
.sb .dn { width: 12px; height: 10px; background: #8b8b8b; margin-top: auto; clip-path: polygon(6% 0, 94% 0, 100% 18%, 58% 100%, 42% 100%, 0 18%); }
.sb s { width: 11px; background: #8b8b8b; border-radius: 6px; }
.s-pal { margin-left: 3px; border-right: 1px solid #b5b5b5; width: 20px; padding-right: 0; }
.pal { width: 308px; padding: 4px 0 0 2px; flex: none; }
.find { width: 306px; height: 25px; border: 1px solid #d2d2d2; border-radius: 5px; font-size: 13px; line-height: 22px; padding-left: 8px; color: #858585; letter-spacing: .72px; }
.cat { margin-top: 11px; height: 57px; border-top: 1px solid #b5b5b5; line-height: 55px; padding-left: 12px; letter-spacing: .6px; }
.items { border: 1px solid #b5b5b5; border-top-width: 2px; height: 700px; }
.item { height: 55.400px; display: flex; align-items: center; padding: 0 13px 0 7px; }
.item.on { background: #ecd2e2; }
.q { width: 15px; height: 15px; border: 1.500px solid #ccc; border-radius: 6px; font: 700 11px/12px "Liberation Sans", sans-serif; color: #8a8a8a; text-align: center; background: #fff; flex: none; }
.item i { width: 25px; height: 25px; color: #000; margin: 2px 13px 0 -1px; }
.item span { letter-spacing: .28px; margin-top: 8px; }
.item .q { margin: -4px 0 0 auto; }

.viewer { width: 1001px; flex: none; padding-left: 276px; padding-top: 4px; }
.phone { position: relative; width: 447px; height: 900px; border-radius: 62px 62px 0 0; background: linear-gradient(90deg, #555 0 4px, #222 5px, #777 8px, #555 10px, #111 12px, #444 14px, #444 433px, #111 435px, #555 437px, #777 439px, #222 442px, #555 443px); padding: 15px 14px 0; }
.phone::before { content: ""; position: absolute; left: 60px; right: 60px; top: 0; height: 15px; background: linear-gradient(#666, #444 45%, #111 50%, #222 75%, #666); }
.speaker { position: absolute; left: 219px; top: 0; width: 9px; height: 6px; background: #333; }
.glass { position: relative; width: 419px; height: 880px; border-radius: 46px 46px 0 0; background: #fff; overflow: hidden; margin-top: -1px; }
.appbar { height: 72px; background: #3f51b5; border-bottom: 1px solid #999; display: flex; justify-content: space-between; padding: 17px 22px 0 13px; color: #fff; font-size: 25px; line-height: 34px; letter-spacing: 1.150px; font-weight: 500; }
.kebab { display: flex; flex-direction: column; gap: 2px; margin-top: 15px; }
.kebab b { width: 4px; height: 4px; border-radius: 1px; background: #fff; }
.key { position: absolute; left: 447px; width: 3px; background: linear-gradient(90deg, #222, #666); border-bottom: 2px solid #111; }
.k1 { top: 224px; height: 55px; } .k2 { top: 324px; height: 111px; }
.body { display: flex; font-family: "Liberation Sans", sans-serif; color: #000; }
.s-ph { width: 19px; height: 688px; }
.form { width: 400px; height: 800px; display: flex; flex-direction: column; align-items: center; white-space: nowrap; }
.siren { display: block; flex: none; }
.h { height: 36px; line-height: 36px; font-size: 21.300px; margin-right: 7px; }
.l { height: 34px; line-height: 29px; font-size: 16.100px; margin-right: 7px; }
.tb { width: 200px; height: 32px; border: 1px solid #d6d6d6; border-radius: 5px; box-shadow: inset 0 1px 2px rgba(0,0,0,.12); margin-bottom: 6.700px; flex: none; }
.btn { height: 38px; flex: none; border-radius: 4px; box-shadow: 1px 1px 1px #000; display: flex; align-items: center; justify-content: center; font-size: 15px; color: #1c1c1c; }
.green { background: #0f0; width: 90px; font-weight: 700; font-size: 15px; margin-top: 4px; padding-top: 1px; }
.cyan { background: #0ff; width: 153px; font-weight: 700; font-size: 15px; margin-top: 11px; padding: 0 3px 1px 0; }
.l7 { height: 38px; line-height: 40px; font-size: 15px; margin-right: 6px; }
.grey { background: #e0e0e0; }
.esp { width: 182px; }
.sw { display: flex; align-items: center; height: 47px; gap: 5px; margin-right: 2px; font-weight: 700; font-size: 21.200px; }
.sw i { width: 35px; height: 17px; border-radius: 9px; background: #444; border: 1px solid #222; }
.sw b { display: block; width: 16px; height: 15px; border-radius: 50%; background: #ccc; }
.white { background: #fff; width: 174px; }
.lp { width: 158px; margin-top: 10px; }
.l8 { line-height: 39px; }

.s-view { width: 20px; border-right: 1px solid #b5b5b5; }
.comp { width: 259px; flex: none; }
.treebox { display: flex; height: 581px; overflow: hidden; }
.tree { width: 231px; height: 700px; flex: none; }
.sb.s-tree { height: 581px; width: 19px; padding-bottom: 9px; }
.root { display: flex; height: 45px; }
.minus { width: 11px; height: 11px; margin: 14px 9px 0 8px; border: 1px solid #7b88c8; border-radius: 2px; background: #eef; padding: 4px 1px; }
.minus b { display: block; height: 1.500px; background: #33d; }
.sel { width: 112px; background: #ecd2e2; display: flex; white-space: nowrap; }
.sel i { width: 24px; height: 25px; margin: 6px 4px 0 8px; }
.sel span { line-height: 48px; }
.node { height: 47.500px; display: flex; padding-left: 56px; }
.node i { width: 25px; height: 25px; margin: 8px 3px 0 0; color: #000; }
.node span { line-height: 53px; letter-spacing: .35px; }
.node.textbox i, .node.texting i { margin-right: 4px; }
.node.star i { margin-top: 8px; }
.hs { height: 19px; width: 250px; background: #fbfbfb; display: flex; align-items: center; padding-left: 10px; }
.hs u { width: 10px; height: 12px; background: #8b8b8b; }
.hs .lf { clip-path: polygon(100% 0, 100% 100%, 82% 100%, 0 58%, 0 42%, 82% 0); margin-right: 9px; }
.hs .rt { clip-path: polygon(0 0, 0 100%, 18% 100%, 100% 58%, 100% 42%, 18% 0); margin-left: 18px; }
.hs s { width: 165px; height: 11px; border-radius: 6px; background: #8b8b8b; }
.acts { display: flex; gap: 5px; padding: 5px 0 0 33px; height: 48px; border-bottom: 1px solid #dcdcdc; }
.acts div { height: 37px; line-height: 35px; font-size: 17px; border: 1px solid #9fa693; border-radius: 5px; background: #d3e7a4; color: #a0a594; text-align: center; letter-spacing: .4px; }
.a1 { width: 95px; } .a2 { width: 84px; }
.media { height: 53px; border-bottom: 1px solid #dcdcdc; line-height: 53px; padding-left: 13px; }
.file { display: flex; padding-left: 36px; }
.file i { width: 24px; height: 25px; margin: 20px 4px 0 0; }
.file span { line-height: 78px; }
.s-comp { width: 20px; border-right: 1px solid #b5b5b5; }
.props { width: 259px; flex: none; }
.ptitle { height: 53px; line-height: 53px; padding-left: 13px; letter-spacing: .1px; }
.phead { height: 39px; width: 258px; border: 1px solid #d8d8d8; border-top-width: 2px; display: flex; align-items: center; padding: 0 0 2px 11px; font-weight: 500; color: #000; margin-bottom: 8px; }
.phead b { width: 14px; height: 12px; background: #666; clip-path: polygon(0 0, 100% 0, 50% 100%); margin: -4px 6px 0 0; }
.prop { padding-left: 10px; }
.pl { display: flex; height: 40px; padding-left: 3px; white-space: nowrap; }
.pl span { line-height: 48px; letter-spacing: .1px; }
.pl .q { margin: 1px 0 0 4px; }
.next { display: block; margin: 2px 0 0 226px; }
.area, .select, .field { border: 1px solid #d3d3d3; border-radius: 4px; display: flex; }
.area { align-items: flex-end; justify-content: flex-end; padding: 2px; }
.select { align-items: center; padding-left: 4px; gap: 12px; white-space: nowrap; letter-spacing: .1px; }
.field { align-items: center; padding-left: 7px; font-size: 13px; color: #333; box-shadow: inset 0 1px 2px rgba(0,0,0,.12); }
.color { display: flex; padding: 11px 0 0 3px; }
.color i { width: 21px; height: 20px; border: 1.200px solid #222; border-radius: 50%; }
.color span { margin-left: 41px; line-height: 18px; letter-spacing: .3px; }
.check { width: 16px; height: 16px; border: 1.300px solid #666; border-radius: 3px; margin: 6px 0 0 3px; }
.s-prop { width: 19px; }

footer { height: 38px; text-align: center; font-size: 16px; line-height: 38px; color: #7f7f7f; letter-spacing: .7px; margin-left: 2px; }
footer a { text-decoration: underline; }

.taskbar { height: 60px; flex: none; display: flex; align-items: center; background: linear-gradient(90deg, #331f14 0, #352015 560px, #2b2a2a 680px, #2b2a2a 1740px, #381a12 1850px, #3a1a12); color: #fff; font-family: "Open Sans", sans-serif; }
.weather { width: 40px; margin-left: 28px; position: relative; height: 42px; }
.weather svg { display: block; }
.weather b { position: absolute; left: 12px; top: 0; width: 20px; height: 20px; border-radius: 50%; background: #c42b1c; font: 400 13px/19px "Open Sans", sans-serif; text-align: center; }
.winlogo { margin-left: 423px; width: 20px; display: grid; grid-template-columns: 9.500px 9.500px; gap: 1px; }
.winlogo i { height: 9.500px; background: linear-gradient(135deg, #6bdcff, #1b9cf0); }
.tsearch { margin: -1px 4px 0 13px; width: 273px; height: 38px; border-radius: 19px; background: #f3f3f1; display: flex; align-items: center; color: #444; font-size: 16.500px; padding: 0 15px 0 11px; flex: none; }
.tsearch i { width: 24px; height: 24px; color: #222; }
.tsearch span { margin-left: 10px; letter-spacing: -.1px; }
.tsearch svg { margin-left: auto; }
.task { width: 40px; height: 60px; flex: none; position: relative; display: flex; align-items: center; justify-content: center; }
.task i { width: 21px; height: 21px; position: relative; z-index: 1; }
.act::before { content: ""; position: absolute; left: 4px; top: 5px; width: 33px; height: 50px; border-radius: 5px; background: #3a3a3a; border: 1px solid #474747; }
.dot { position: absolute; left: 18px; bottom: 6px; width: 5px; height: 4px; border-radius: 2px; background: #999; }
.run { position: absolute; left: 13px; bottom: 6px; width: 14px; height: 4px; border-radius: 2px; background: #4cb8f5; }
.bdg { position: absolute; left: 28px; top: 15px; width: 5px; height: 5px; border-radius: 50%; }
.tray { margin-left: auto; display: flex; align-items: center; padding-right: 24px; font-size: 14.500px; line-height: 20px; }
.cloud { margin-left: 21px; }
.lang { margin-left: 22px; width: 30px; text-align: center; white-space: nowrap; }
.wifi { margin-left: 22px; } .vol { margin-left: 8px; } .bat { margin-left: 11px; }
.clock { width: 96px; text-align: right; white-space: nowrap; letter-spacing: .05px; }
</style>
